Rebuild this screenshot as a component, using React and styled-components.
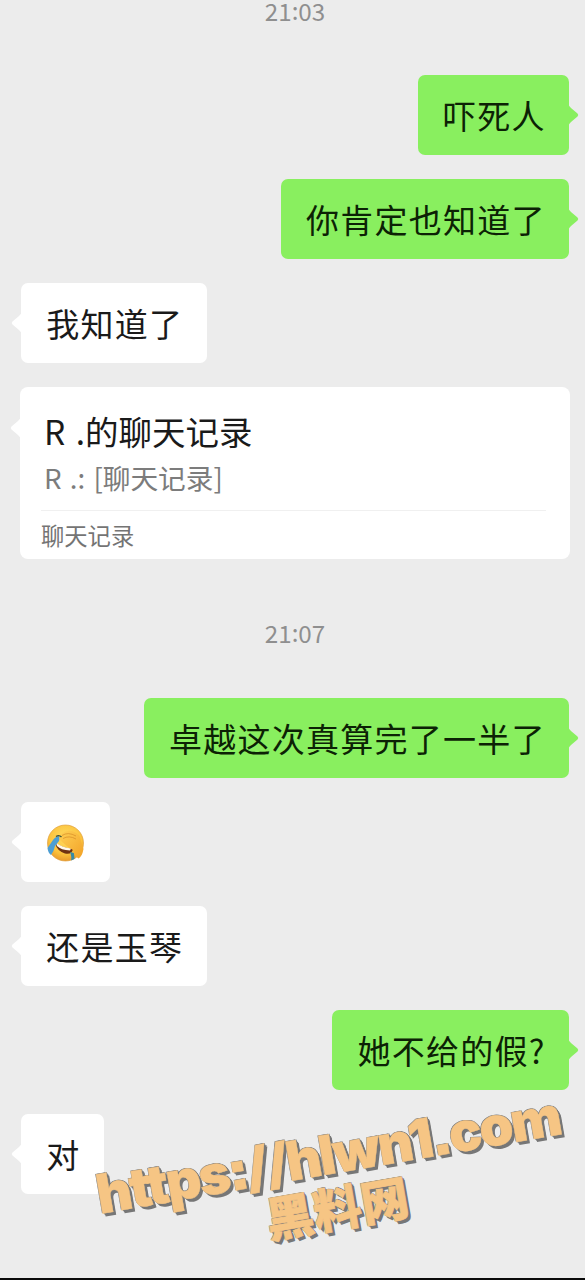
import React from "react";
import styled, { createGlobalStyle } from "styled-components";

const GlobalStyle = createGlobalStyle`
  * { box-sizing: border-box; }
  html, body { margin: 0; padding: 0; background: #ececec; }
  body { font-family: "Noto Sans CJK SC", "Noto Sans", sans-serif; }
`;

const Screen = styled.main`
  position: relative;
  width: 585px;
  height: 1280px;
  overflow: hidden;
  background: #ececec;
  border-bottom: 2px solid #0a0a0a;
  display: flex;
  flex-direction: column;
`;

const Thread = styled.div`
  display: flex;
  flex-direction: column;
  gap: 24.15px;
  padding: 0 16px 0 21px;
`;

const Time = styled.time`
  display: flex;
  justify-content: center;
  height: ${(p) => p.$height}px;
  padding-top: ${(p) => p.$top}px;
  margin-bottom: ${(p) => p.$after}px;
  font-size: 24.2px;
  line-height: 22px;
  color: #8f8f8f;
`;

const Colon = styled.span`
  transform: translateY(-1px);
`;

const Row = styled.div`
  display: flex;
  justify-content: ${(p) => (p.$mine ? "flex-end" : "flex-start")};
`;

const Bubble = styled.div`
  position: relative;
  height: 80px;
  padding: 0 24.3px;
  border-radius: 7px;
  display: flex;
  align-items: center;
  white-space: nowrap;
  font-size: 33px;
  letter-spacing: 1.25px;
  line-height: 80px;
  color: ${(p) => (p.$mine ? "#0c2205" : "#1a1a1a")};
  background: ${(p) => (p.$mine ? "#89ef5f" : "#ffffff")};
`;

const BubbleText = styled.span`
  padding-left: 1px;
  margin-right: -1px;
`;

const Tail = styled.svg`
  position: absolute;
  top: ${(p) => p.$top}px;
  width: 11px;
  height: 24px;
  ${(p) => (p.$mine ? "right: -10px;" : "left: -10px; transform: scaleX(-1);")}
  fill: ${(p) => (p.$mine ? "#89ef5f" : "#ffffff")};
`;

const Card = styled.article`
  position: relative;
  width: 550px;
  height: 172px;
  margin-left: -1px;
  padding: 21px 24px 0 21px;
  flex: none;
  border-radius: 8px;
  background: #ffffff;
  white-space: nowrap;
`;

const CardTitle = styled.h2`
  margin: 0;
  padding-left: 3px;
  font-size: 33.5px;
  font-weight: 400;
  line-height: 46px;
  word-spacing: 3px;
  color: #1a1a1a;
`;

const CardSummary = styled.p`
  margin: 0;
  padding-left: 3px;
  height: 56px;
  font-size: 27.7px;
  line-height: 46px;
  word-spacing: 2px;
  color: #7c7c7c;
`;

const CardKind = styled.footer`
  border-top: 1px solid #f0f0f0;
  font-size: 23.3px;
  line-height: 48px;
  color: #747474;
`;

const Face = styled.svg`
  width: 39px;
  height: 40px;
  margin-left: 1px;
  margin-right: 0.5px;
  margin-top: 2px;
  display: block;
`;

const Watermark = styled.div`
  position: absolute;
  left: 95px;
  top: 1127px;
  width: 474px;
  display: flex;
  flex-direction: column;
  align-items: center;
  transform: rotate(-9.8deg);
  color: #f6c584;
  text-shadow: -0.6px -0.6px 0 #777, 0.8px -0.4px 0 #777, 1px 1px 0 #777, 2px 2px 0 #777, 2.5px 3.5px 0 #777;
  white-space: nowrap;
`;

const Address = styled.div`
  font-family: Inter, sans-serif;
  font-weight: 900;
  font-size: 54.5px;
  line-height: 54px;
  letter-spacing: -2.1px;
  font-feature-settings: "ss07";
  -webkit-text-stroke: 0.4px #f6c584;
`;

const SiteName = styled.div`
  margin-top: 1px;
  font-weight: 900;
  font-size: 48px;
  line-height: 48px;
  -webkit-text-stroke: 0.7px #f6c584;
`;

function TailShape({ mine, top = 28 }) {
  return (
    <Tail $mine={mine} $top={top} viewBox="0 0 11 24">
      <path d="M0 1 Q1 3 3 5 L9.5 10.5 Q11 12 9.5 13.5 L3 19 Q1 21 0 23Z" />
    </Tail>
  );
}

function Message({ mine, children }) {
  return (
    <Row $mine={mine}>
      <Bubble $mine={mine}>
        <TailShape mine={mine} />
        {typeof children === "string" ? <BubbleText>{children}</BubbleText> : children}
      </Bubble>
    </Row>
  );
}

function Stamp({ hour, minute, ...box }) {
  return (
    <Time {...box}>
      {hour}
      <Colon>:</Colon>
      {minute}
    </Time>
  );
}

function LaughingFace() {
  return (
    <Face viewBox="0 0 39 40" role="img" aria-label="笑哭捂脸">
      <defs>
        <radialGradient id="skin" cx="50%" cy="35%" r="65%">
          <stop offset="0" stopColor="#ffdc62" />
          <stop offset="0.7" stopColor="#fbc23c" />
          <stop offset="1" stopColor="#e99b2c" />
        </radialGradient>
        <linearGradient id="hand" x1="0" y1="0" x2="1" y2="1">
          <stop offset="0" stopColor="#ffd155" />
          <stop offset="1" stopColor="#f2a127" />
        </linearGradient>
      </defs>
      <circle cx="19.5" cy="20" r="18" fill="url(#skin)" stroke="#e0a040" strokeWidth="0.7" />
      <path d="M9 20 Q17 25 27 26 Q26 32 19 30.5 Q11 28 9 20Z" fill="#6f3212" />
      <path d="M10 20 Q17 24.5 25 25.5 L24 27.5 Q15 27 11 23Z" fill="#fff8ea" />
      <path d="M14 13 Q10 13 7 17 L1.5 25 Q2 30 5 32 Q8 28 9 23 L13 18Z" fill="#4c9ed3" />
      <path d="M24 29 L28 30 L28.5 36 L25 37.5 Q26 34 24 29Z" fill="#398aa5" />
      <path d="M14 12 Q19 7 26 8 Q34 10 35 18 L37.5 26 Q36 34 32.5 35.5 Q28 33 27 27 Q21 24 15 18 Q12 15 14 12Z" fill="url(#hand)" />
      <path d="M16 12.5 Q22 8.5 30 13 M17 15.5 Q23 12 30 16" fill="none" stroke="#d68b27" strokeWidth="0.7" />
      <path d="M10 13.5 Q13 11.5 15.5 14" fill="none" stroke="#3d5138" strokeWidth="1.4" />
    </Face>
  );
}

export default function App() {
  return (
    <>
      <GlobalStyle />
      <Screen>
        <Thread>
          <Stamp hour="21" minute="03" $height={24} $top={0} $after={26.75} />
          <Message mine>吓死人</Message>
          <Message mine>你肯定也知道了</Message>
          <Message>我知道了</Message>
          <Card>
            <TailShape top={29} />
            <CardTitle>R .的聊天记录</CardTitle>
            <CardSummary>R .: [聊天记录]</CardSummary>
            <CardKind>聊天记录</CardKind>
          </Card>
          <Stamp hour="21" minute="07" $height={64} $top={39} $after={26.25} />
          <Message mine>卓越这次真算完了一半了</Message>
          <Message>
            <LaughingFace />
          </Message>
          <Message>还是玉琴</Message>
          <Message mine>她不给的假?</Message>
          <Message>对</Message>
        </Thread>
        <Watermark>
          <Address>https://hlwn1.com</Address>
          <SiteName>黑料网</SiteName>
        </Watermark>
      </Screen>
    </>
  );
}
